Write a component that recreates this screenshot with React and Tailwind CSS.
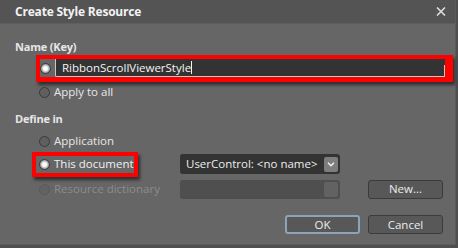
import React from 'react'

const font = { fontFamily: '"Open Sans", "Noto Sans", sans-serif' }

function Radio({ checked, disabled }) {
  if (checked) {
    return (
      <span className="block w-[11px] h-[11px] rounded-full border border-[#3d3d3d] bg-[radial-gradient(circle,#ffffff_0%,#ffffff_30%,#a8a8a8_60%,#5c5c5c_100%)] shrink-0" />
    )
  }
  return (
    <span
      className={
        'block w-[11px] h-[11px] rounded-full border shrink-0 ' +
        (disabled ? 'border-[#5a5a5a] bg-[#626262]' : 'border-[#3a3a3a] bg-[#5f5f5f]')
      }
    />
  )
}

function Button({ children, primary }) {
  return (
    <button
      className={
        'w-[75px] h-[19px] rounded-[3px] bg-[#585858] text-[11.5px] text-[#ececec] leading-none flex items-center justify-center ' +
        (primary ? 'border-2 border-[#8ea3b8]' : 'border border-[#3b3b3b]')
      }
    >
      {children}
    </button>
  )
}

export default function App() {
  return (
    <div className="w-[458px] h-[248px] bg-[#4f4f4f] overflow-hidden" style={font}>
      <div className="w-[456px] h-[245px] bg-[#666666] flex flex-col border-r border-b border-[#5b5b5b]">
        {/* title bar */}
        <div className="h-[24px] bg-[#545454] border-b border-[#5e5e5e] flex items-center justify-between pl-[15px] pr-[9px]">
          <span className="text-[12px] font-bold tracking-[-0.2px] text-[#f2f2f2]">Create Style Resource</span>
          <svg width="10" height="9" viewBox="0 0 10 9">
            <path d="M1 0.5 L9 8.5 M9 0.5 L1 8.5" stroke="#dcdcdc" strokeWidth="1.6" />
          </svg>
        </div>

        <div className="flex flex-col pl-[15px] pr-[12px]">
          <div className="mt-[15px] h-[16px] flex items-center text-[11px] font-bold tracking-[-0.2px] text-[#e6e6e6]">Name (Key)</div>

          {/* red highlight around name input */}
          <div className="ml-[21px] w-[417px] h-[27px] border-t-4 border-l-4 border-b-[5px] border-r-[8px] border-[#ff0000] shadow-[2px_3px_3px_rgba(0,0,0,0.55)] flex items-center">
            <Radio checked />
            <div className="ml-[4px] flex-1 h-[18px] bg-[#333333] border-l border-b border-[#c8c8c8] rounded-bl-[2px] flex items-center pl-[6px] relative">
              <span className="text-[11.5px] text-[#f4f4f4]">RibbonScrollViewerStyle</span>
              <span className="w-px h-[13px] bg-[#f4f4f4]" />
              <span className="absolute right-0 bottom-0 w-px h-[11px] bg-[#c8c8c8]" />
            </div>
          </div>

          <div className="mt-[2px] h-[16px] flex items-center gap-[4px] pl-[24px]">
            <Radio />
            <span className="text-[11.5px] text-[#e6e6e6]">Apply to all</span>
          </div>

          <div className="mt-[11px] h-[16px] flex items-center text-[11px] font-bold tracking-[-0.2px] text-[#e6e6e6]">Define in</div>

          <div className="mt-[6px] h-[16px] flex items-center gap-[4px] pl-[24px]">
            <Radio />
            <span className="text-[11.5px] text-[#e6e6e6]">Application</span>
          </div>

          <div className="mt-[2px] h-[26px] flex items-center">
            <div className="ml-[17px] w-[106px] h-[25px] border-4 border-[#ff0000] shadow-[2px_3px_3px_rgba(0,0,0,0.55)] flex items-center gap-[4px] pl-[3px]">
              <Radio checked />
              <span className="text-[11.5px] text-[#f0f0f0] whitespace-nowrap">This document</span>
            </div>
            <div className="ml-[42px] w-[160px] h-[20px] rounded-[3px] bg-[#333333] flex items-center justify-between pl-[6px] pr-[2px]">
              <span className="text-[11.5px] text-[#ececec] whitespace-nowrap">UserControl: &lt;no name&gt;</span>
              <span className="w-[14px] h-[15px] rounded-[2px] bg-[#7e7e7e] flex items-center justify-center">
                <svg width="8" height="5" viewBox="0 0 8 5">
                  <path d="M1 0.8 L4 3.8 L7 0.8" fill="none" stroke="#f2f2f2" strokeWidth="1.5" />
                </svg>
              </span>
            </div>
          </div>

          <div className="mt-[2px] h-[20px] flex items-center">
            <div className="w-[141px] flex items-center gap-[4px] pl-[24px]">
              <Radio disabled />
              <span className="text-[11.5px] text-[#8c8c8c] whitespace-nowrap">Resource dictionary</span>
            </div>
            <div className="ml-[24px] w-[160px] h-[19px] rounded-[3px] bg-[#4f4f4f] flex items-center justify-end pr-[2px]">
              <span className="w-[14px] h-[15px] rounded-[2px] bg-[#626262]" />
            </div>
            <div className="ml-auto">
              <Button>New...</Button>
            </div>
          </div>

          <div className="mt-[16px] flex justify-end gap-[8px]">
            <Button primary>OK</Button>
            <Button>Cancel</Button>
          </div>
        </div>
      </div>
    </div>
  )
}
